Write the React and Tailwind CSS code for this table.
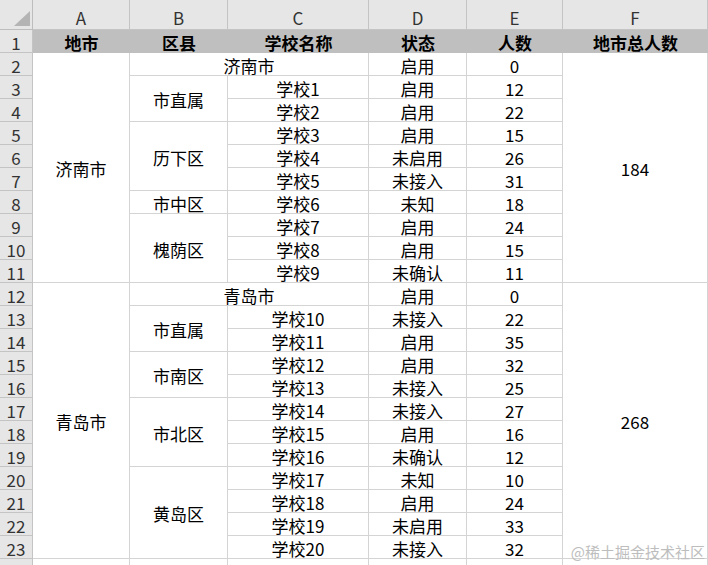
import React from "react";

const RS = [
  "", "row-start-1", "row-start-2", "row-start-3", "row-start-4", "row-start-5",
  "row-start-6", "row-start-7", "row-start-8", "row-start-9", "row-start-10",
  "row-start-11", "row-start-12", "row-start-13", "row-start-14", "row-start-15",
  "row-start-16", "row-start-17", "row-start-18", "row-start-19", "row-start-20",
  "row-start-21", "row-start-22", "row-start-23", "row-start-24", "row-start-25",
];

const rows = [
  [2, null, "启用", "0"],
  [3, "学校1", "启用", "12"],
  [4, "学校2", "启用", "22"],
  [5, "学校3", "启用", "15"],
  [6, "学校4", "未启用", "26"],
  [7, "学校5", "未接入", "31"],
  [8, "学校6", "未知", "18"],
  [9, "学校7", "启用", "24"],
  [10, "学校8", "启用", "15"],
  [11, "学校9", "未确认", "11"],
  [12, null, "启用", "0"],
  [13, "学校10", "未接入", "22"],
  [14, "学校11", "启用", "35"],
  [15, "学校12", "启用", "32"],
  [16, "学校13", "未接入", "25"],
  [17, "学校14", "未接入", "27"],
  [18, "学校15", "启用", "16"],
  [19, "学校16", "未确认", "12"],
  [20, "学校17", "未知", "10"],
  [21, "学校18", "启用", "24"],
  [22, "学校19", "未启用", "33"],
  [23, "学校20", "未接入", "32"],
];

const merged = [
  { cls: "row-start-3 row-span-10 col-start-2", t: "济南市" },
  { cls: "row-start-3 col-start-3 col-span-2", t: "济南市" },
  { cls: "row-start-4 row-span-2 col-start-3", t: "市直属" },
  { cls: "row-start-6 row-span-3 col-start-3", t: "历下区" },
  { cls: "row-start-9 col-start-3", t: "市中区" },
  { cls: "row-start-10 row-span-3 col-start-3", t: "槐荫区" },
  { cls: "row-start-3 row-span-10 col-start-7", t: "184" },
  { cls: "row-start-13 row-span-12 col-start-2", t: "青岛市" },
  { cls: "row-start-13 col-start-3 col-span-2", t: "青岛市" },
  { cls: "row-start-14 row-span-2 col-start-3", t: "市直属" },
  { cls: "row-start-16 row-span-2 col-start-3", t: "市南区" },
  { cls: "row-start-18 row-span-3 col-start-3", t: "市北区" },
  { cls: "row-start-21 row-span-4 col-start-3", t: "黄岛区" },
  { cls: "row-start-13 row-span-12 col-start-7", t: "268" },
];

const cell =
  "flex items-center justify-center border-r border-b border-[#d4d4d4] bg-white text-black text-[17px] leading-none";

function Txt({ children }) {
  return <span className="translate-y-[1px]">{children}</span>;
}

export default function App() {
  const letters = ["A", "B", "C", "D", "E", "F"];
  const letterCols = ["col-start-2", "col-start-3", "col-start-4", "col-start-5", "col-start-6", "col-start-7"];
  const headers = ["地市", "区县", "学校名称", "状态", "人数", "地市总人数"];
  return (
    <div className="relative h-[565px] w-[708px] overflow-hidden bg-white font-['Noto_Sans_CJK_SC','Noto_Sans',sans-serif]">
      <div className="grid grid-cols-[33px_97px_98px_141px_98px_96px_145px] grid-rows-[30px_repeat(24,23px)]">
        {/* corner */}
        <div className="row-start-1 col-start-1 relative border-r border-b border-[#bdbdbd] bg-[#e6e6e6]">
          <svg className="absolute right-[2px] bottom-[3px]" width="16" height="15" viewBox="0 0 16 15">
            <polygon points="16,0 16,15 0,15" fill="#b4b4b4" />
          </svg>
        </div>
        {letters.map((l, i) => (
          <div
            key={l}
            className={`row-start-1 ${letterCols[i]} flex items-end justify-center pb-[3px] border-r border-b border-[#c4c4c4] bg-[#e6e6e6] text-[17px] leading-none text-[#333]`}
          >
            {l}
          </div>
        ))}
        {/* row numbers */}
        {Array.from({ length: 24 }, (_, i) => (
          <div
            key={i}
            className={`${RS[i + 2]} col-start-1 flex items-center justify-center border-r border-b border-[#c4c4c4] bg-[#e6e6e6] text-[17px] leading-none text-[#333]`}
          >
            {i < 23 ? <Txt>{i + 1}</Txt> : null}
          </div>
        ))}
        {/* header row 1 */}
        {headers.map((h, i) => (
          <div
            key={h}
            className={`row-start-2 ${letterCols[i]} flex items-center justify-center bg-[#bfbfbf] text-[17px] font-bold leading-none text-black`}
          >
            <Txt>{h}</Txt>
          </div>
        ))}
        {merged.map((m, i) => (
          <div key={"m" + i} className={`${cell} ${m.cls}`}>
            <Txt>{m.t}</Txt>
          </div>
        ))}
        {rows.map(([r, c, d, e]) => (
          <React.Fragment key={r}>
            {c && (
              <div className={`${cell} ${RS[r + 1]} col-start-4`}>
                <Txt>{c}</Txt>
              </div>
            )}
            <div className={`${cell} ${RS[r + 1]} col-start-5`}>
              <Txt>{d}</Txt>
            </div>
            <div className={`${cell} ${RS[r + 1]} col-start-6`}>
              <Txt>{e}</Txt>
            </div>
          </React.Fragment>
        ))}
        {/* row 24 */}
        {letterCols.map((c) => (
          <div key={c} className={`${cell} row-start-25 ${c}`} />
        ))}
      </div>
      <div className="absolute right-[3px] bottom-[6px] text-[15px] leading-none text-[#bdbdbd]">
        @稀土掘金技术社区
      </div>
    </div>
  );
}
